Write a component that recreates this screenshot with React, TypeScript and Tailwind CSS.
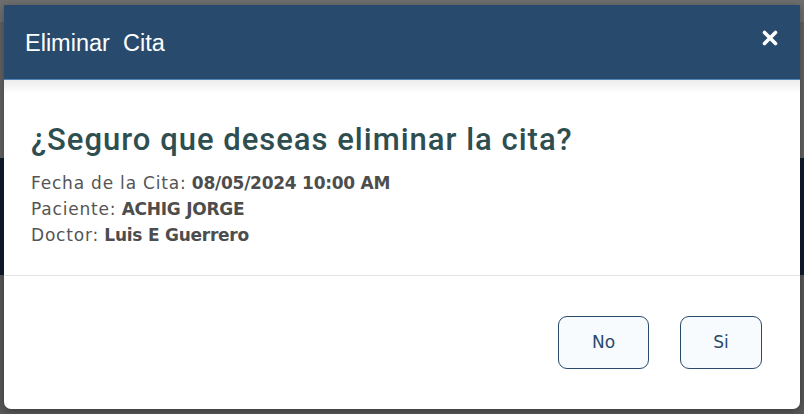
import React from 'react';

const bodyFont = { fontFamily: '"DejaVu Sans", "Open Sans", sans-serif' };
const titleFont = { fontFamily: '"Liberation Sans", Arial, sans-serif' };
const headingFont = { fontFamily: 'Roboto, "Liberation Sans", sans-serif' };

const CloseIcon: React.FC = () => (
  <svg width="16" height="16" viewBox="0 0 16 16" fill="none">
    <path d="M2.5 2.5L13.5 13.5M13.5 2.5L2.5 13.5" stroke="white" strokeWidth="3.6" strokeLinecap="round" />
  </svg>
);

const DeleteAppointmentModal: React.FC = () => {
  const rows = [
    { label: 'Fecha de la Cita:', value: '08/05/2024 10:00 AM' },
    { label: 'Paciente:', value: 'ACHIG JORGE' },
    { label: 'Doctor:', value: 'Luis E Guerrero' },
  ];

  return (
    <div className="absolute left-[4px] top-[5px] w-[796px] h-[404px] bg-white rounded-b-[7px] shadow-[0_2px_10px_rgba(0,0,0,0.35)] flex flex-col overflow-hidden">
      <div className="h-[75px] shrink-0 bg-[#284b6d] border-b border-[#4f84b8] flex items-center justify-between pl-[21px] pr-[20px]">
        <h2 className="text-[23.5px] leading-none text-white whitespace-pre mt-[3px]" style={titleFont}>
          Eliminar  Cita
        </h2>
        <button type="button" className="w-[20px] h-[20px] flex items-center justify-center -mt-[9px]">
          <CloseIcon />
        </button>
      </div>

      <div className="h-[195px] shrink-0 bg-[linear-gradient(to_bottom,#ececec_0px,#ffffff_14px)] pl-[27px] pt-[42px]">
        <h3 className="text-[31px] leading-[36px] font-medium tracking-[1px] text-[#2e4e50]" style={headingFont}>
          ¿Seguro que deseas eliminar la cita?
        </h3>
        <div className="mt-[12px] text-[17px] leading-[26px] text-[#555555]" style={bodyFont}>
          {rows.map((row) => (
            <p key={row.label}>
              <span className="tracking-[0.8px]">{row.label}</span>{' '}
              <span className="font-bold text-[#4d4d4d] tracking-[-0.25px]">{row.value}</span>
            </p>
          ))}
        </div>
      </div>

      <div className="flex-1 border-t border-[#e4e4e4] flex items-start justify-end gap-[31px] pt-[40px] pr-[38px]">
        <button
          type="button"
          className="w-[91px] h-[53px] rounded-[9px] border border-[#2a4a6b] bg-[#f8fbfe] text-[17px] text-[#2a4a6b]"
          style={bodyFont}
        >
          No
        </button>
        <button
          type="button"
          className="w-[82px] h-[53px] rounded-[9px] border border-[#2a4a6b] bg-[#f8fbfe] text-[17px] text-[#2a4a6b]"
          style={bodyFont}
        >
          Si
        </button>
      </div>
    </div>
  );
};

export default function App() {
  return (
    <div className="relative w-[804px] h-[414px] overflow-hidden bg-[#5c5c5c]">
      {/* backdrop: dimmed page behind the modal */}
      <div className="flex flex-col h-full">
        <div className="h-[158px] bg-[#626262] border-t-[22px] border-[#6f6f6f]" />
        <div className="h-[117px] bg-[#0f1b2b]" />
        <div className="flex-1 bg-[#585858]" />
      </div>
      <DeleteAppointmentModal />
    </div>
  );
}
